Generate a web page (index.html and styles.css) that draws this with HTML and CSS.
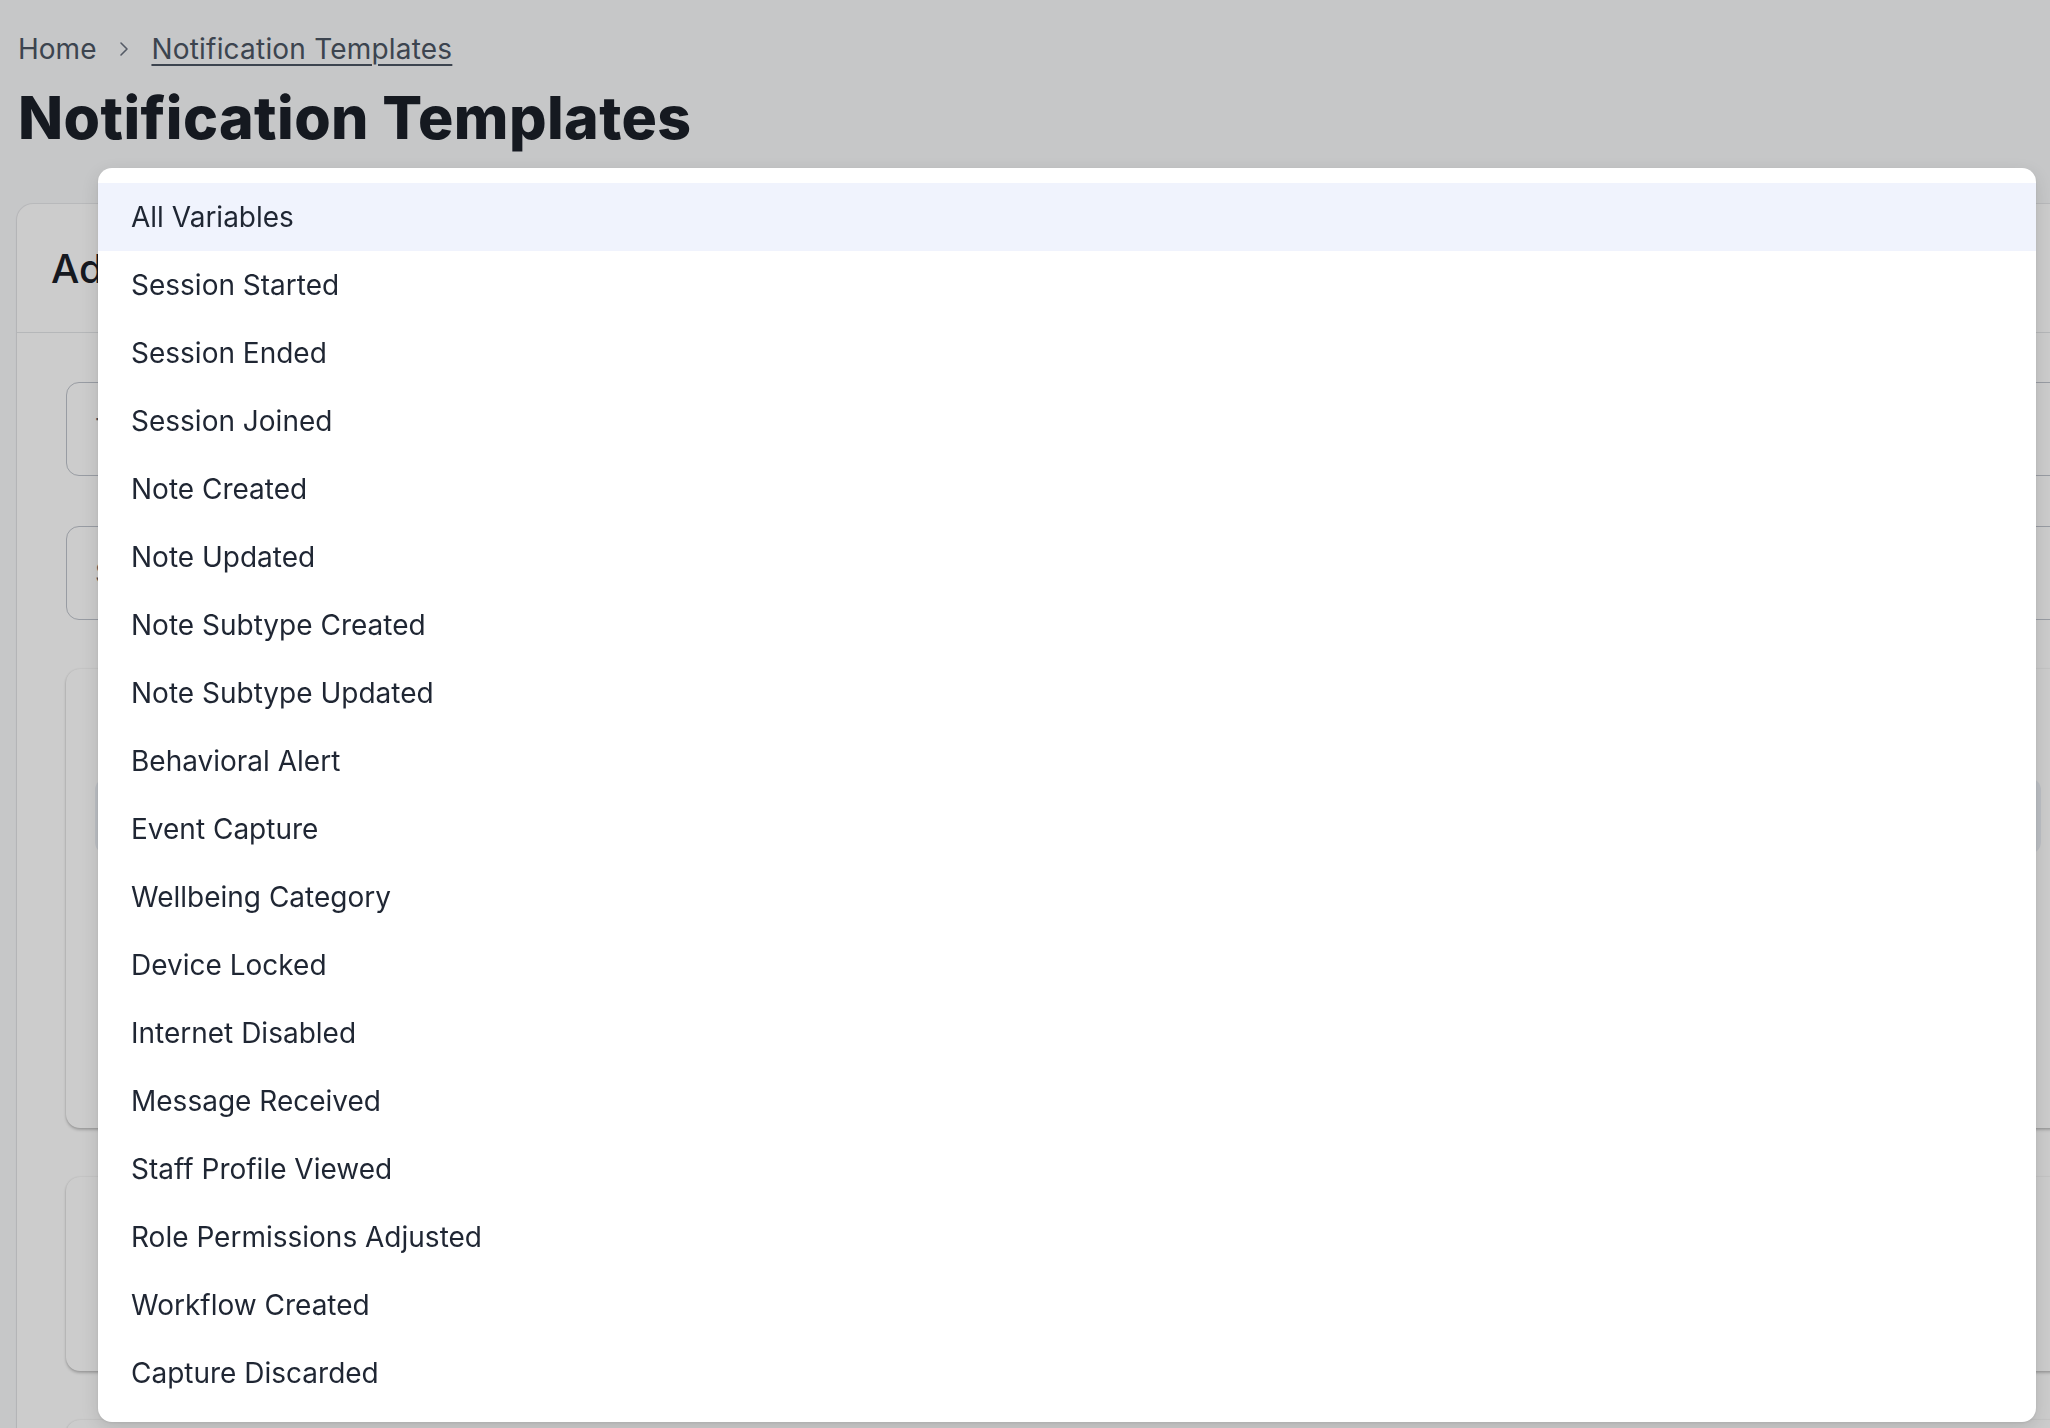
FILE: index.html
```html
<!DOCTYPE html>
<html lang="en">
<head>
<meta charset="utf-8">
<title>Notification Templates</title>
<link rel="stylesheet" href="styles.css">
</head>
<body>
<div class="page">
  <nav class="breadcrumb">
    <span class="crumb">Home</span>
    <svg class="crumb-sep" width="12" height="18" viewBox="0 0 12 18" fill="none"><path d="M3 3l6 6-6 6" stroke="currentColor" stroke-width="1.6" stroke-linecap="round" stroke-linejoin="round"/></svg>
    <a class="crumb crumb-current" href="#">Notification Templates</a>
  </nav>
  <h1 class="title">Notification Templates</h1>

  <section class="card">
    <header class="card-header">Add Notification Template</header>
    <div class="card-body">
      <div class="field"><span class="field-text">Template Name</span></div>
      <div class="field"><span class="field-text">Subject</span></div>
      <div class="panel panel-tall">
        <div class="panel-chip"></div>
      </div>
      <div class="panel panel-short"></div>
      <div class="panel panel-short"></div>
    </div>
  </section>
</div>

<div class="backdrop"></div>

<ul class="menu" role="listbox">
  <li class="menu-item is-active">All Variables</li>
  <li class="menu-item">Session Started</li>
  <li class="menu-item">Session Ended</li>
  <li class="menu-item">Session Joined</li>
  <li class="menu-item">Note Created</li>
  <li class="menu-item">Note Updated</li>
  <li class="menu-item">Note Subtype Created</li>
  <li class="menu-item">Note Subtype Updated</li>
  <li class="menu-item">Behavioral Alert</li>
  <li class="menu-item">Event Capture</li>
  <li class="menu-item">Wellbeing Category</li>
  <li class="menu-item">Device Locked</li>
  <li class="menu-item">Internet Disabled</li>
  <li class="menu-item">Message Received</li>
  <li class="menu-item">Staff Profile Viewed</li>
  <li class="menu-item">Role Permissions Adjusted</li>
  <li class="menu-item">Workflow Created</li>
  <li class="menu-item">Capture Discarded</li>
</ul>
</body>
</html>
```

FILE: styles.css
```css
* { box-sizing: border-box; }

html, body {
  margin: 0;
  height: 100%;
  overflow: hidden;
}

body {
  background: #f8f9fb;
  font-family: Inter, "Noto Sans", sans-serif;
  color: #1f2530;
}

.page {
  padding: 28px 0 0 18px;
  width: 2200px;
}

/* breadcrumb */
.breadcrumb {
  display: flex;
  align-items: center;
  height: 42px;
  font-size: 28px;
  color: #4b5563;
}

.crumb { line-height: 42px; }

.crumb-sep {
  margin: 0 21px 0 22px;
  color: #6b7280;
}

.crumb-current {
  color: #4b5563;
  letter-spacing: 0.2px;
  text-decoration: underline;
  text-underline-offset: 5px;
  text-decoration-thickness: 2px;
}

.title {
  margin: 12px 0 0 0;
  font-size: 59px;
  line-height: 72px;
  font-weight: 800;
  color: #1b2029;
  letter-spacing: 0.4px;
}

/* form card */
.card {
  margin: 50px 0 0 -1px;
  width: 2100px;
  background: #ffffff;
  border-radius: 16px;
  box-shadow: 0 0 0 1px rgba(0, 0, 0, 0.06), 0 1px 3px rgba(0, 0, 0, 0.08);
}

.card-header {
  height: 129px;
  padding-left: 34px;
  display: flex;
  align-items: center;
  font-size: 40px;
  font-weight: 500;
  color: #1b2029;
  border-bottom: 1px solid #e3e5e8;
}

.card-body {
  padding: 49px 48px 0 49px;
  display: flex;
  flex-direction: column;
  gap: 50px;
}

.field {
  height: 94px;
  border: 1.5px solid #bfc4cc;
  border-radius: 13px;
  display: flex;
  align-items: center;
  padding-left: 28px;
}

.field-text {
  font-size: 28px;
  color: #5b6371;
}

.panel {
  background: #ffffff;
  border-radius: 14px;
  box-shadow: 0 2px 3px rgba(0, 0, 0, 0.22), 0 0 2px rgba(0, 0, 0, 0.12);
  margin-top: -1px;
}

.panel-tall {
  height: 459px;
  padding: 109px 28px 0 29px;
}

.panel-short { height: 194px; }

.panel-chip {
  height: 76px;
  background: #eceff6;
  border-radius: 12px;
}

/* dimming layer behind the open menu */
.backdrop {
  position: fixed;
  inset: 0;
  background: rgba(0, 0, 0, 0.2);
}

/* variable picker menu */
.menu {
  position: absolute;
  left: 98px;
  top: 168px;
  width: 1938px;
  margin: 0;
  padding: 15px 0 15px;
  list-style: none;
  background: #ffffff;
  border-radius: 14px;
  box-shadow: 0 6px 18px rgba(0, 0, 0, 0.12), 0 1px 3px rgba(0, 0, 0, 0.08);
}

.menu-item {
  height: 68px;
  display: flex;
  align-items: center;
  padding-left: 33px;
  font-size: 28px;
  color: #1f2633;
}

.menu-item.is-active {
  background: #f0f3fd;
}
```
